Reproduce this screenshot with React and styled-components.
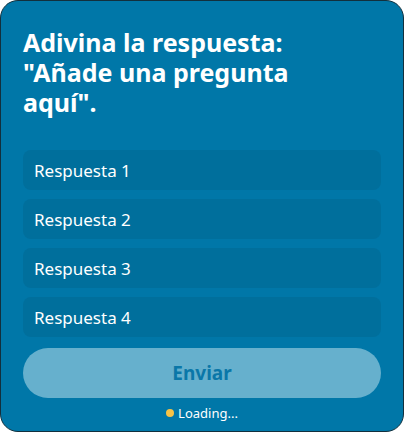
import styled, { createGlobalStyle } from "styled-components";

const GlobalStyle = createGlobalStyle`
  html, body {
    margin: 0;
    padding: 0;
    background: #ffffff;
  }
  * {
    box-sizing: border-box;
  }
`;

const Card = styled.div`
  width: 404px;
  height: 432px;
  background-color: #0077a8;
  border: 1px solid #12303d;
  border-radius: 18px;
  padding: 26px 22px 0;
  display: flex;
  flex-direction: column;
  font-family: "Noto Sans", "Open Sans", sans-serif;
  color: #ffffff;
`;

const Title = styled.h1`
  margin: 0 0 33px;
  font-size: 25px;
  line-height: 30px;
  font-weight: 700;
`;

const AnswerList = styled.div`
  display: flex;
  flex-direction: column;
  gap: 9px;
`;

const Answer = styled.div`
  height: 40px;
  display: flex;
  align-items: center;
  padding: 0 11px;
  background-color: #006f9c;
  border-radius: 8px;
  font-size: 17px;
`;

const SendButton = styled.button`
  margin-top: 11px;
  height: 50px;
  border: none;
  border-radius: 25px;
  background-color: #66b0cd;
  color: #0a77a8;
  font-family: inherit;
  font-size: 19px;
  font-weight: 700;
`;

const Status = styled.div`
  margin-top: 6px;
  display: flex;
  align-items: center;
  justify-content: center;
  gap: 4px;
  font-size: 13px;
`;

const Dot = styled.span`
  width: 8px;
  height: 8px;
  border-radius: 50%;
  background-color: #f6c346;
`;

const answers = ["Respuesta 1", "Respuesta 2", "Respuesta 3", "Respuesta 4"];

const App = () => {
  return (
    <>
      <GlobalStyle />
      <Card>
        <Title>
          Adivina la respuesta:
          <br />
          "Añade una pregunta
          <br />
          aquí".
        </Title>
        <AnswerList>
          {answers.map((a) => (
            <Answer key={a}>{a}</Answer>
          ))}
        </AnswerList>
        <SendButton>Enviar</SendButton>
        <Status>
          <Dot />
          Loading...
        </Status>
      </Card>
    </>
  );
};

export default App;
